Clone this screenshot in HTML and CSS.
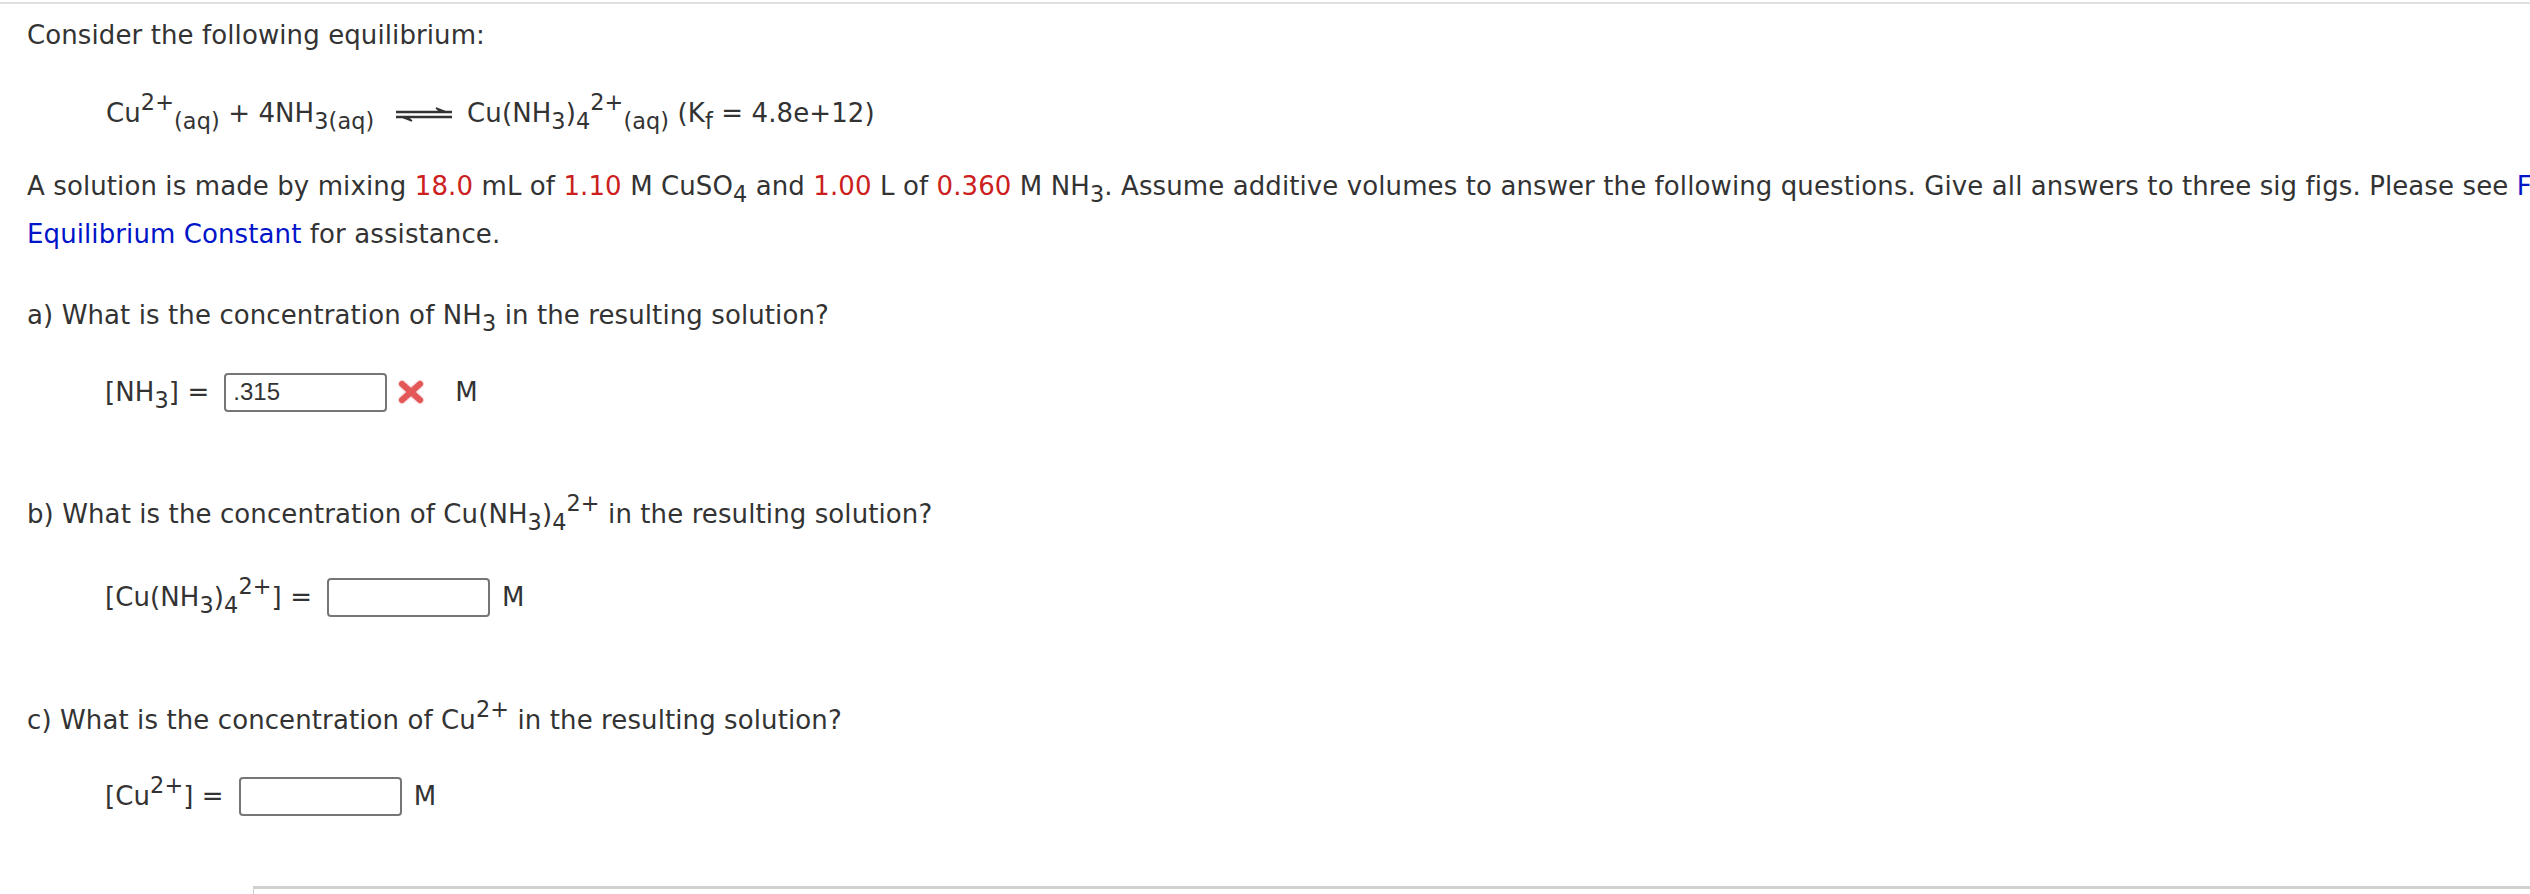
FILE: index.html
```html
<!DOCTYPE html>
<html>
<head>
<meta charset="utf-8">
<link rel="stylesheet" href="styles.css">
</head>
<body>
<div class="page">
  <div class="question">
    <p class="line intro">Consider the following equilibrium:</p>
    <p class="line eq">Cu<sup>2+</sup><sub>(aq)</sub> + 4NH<sub>3(aq)</sub> <svg class="arrow" width="58" height="18" viewBox="0 0 58 18"><path d="M1 7H57M1 12H57" stroke="#333" stroke-width="2.4" fill="none"/><path d="M41 3L50 6.5L45 6.5Z" fill="#333" stroke="#333" stroke-width="1.5"/><path d="M17 16L8 12.5L13 12.5Z" fill="#333" stroke="#333" stroke-width="1.5"/></svg> Cu(NH<sub>3</sub>)<sub>4</sub><sup>2+</sup><sub>(aq)</sub> (K<sub>f</sub> = 4.8e+12)</p>
    <p class="para">A solution is made by mixing <span class="red">18.0</span> mL of <span class="red">1.10</span> M CuSO<sub>4</sub> and <span class="red">1.00</span> L of <span class="red">0.360</span> M NH<sub>3</sub>. Assume additive volumes to answer the following questions. Give all answers to three sig figs. Please see <a class="link" href="#">Formation</a><br><a class="link" href="#">Equilibrium Constant</a> for assistance.</p>

    <p class="line part part-a">a) What is the concentration of NH<sub>3</sub> in the resulting solution?</p>
    <div class="answer answer-a">
      <span class="label">[NH<sub>3</sub>] =</span>
      <span class="box"><span class="val">.315</span></span>
      <svg class="wrong" width="28" height="24" viewBox="0 0 28 24"><path d="M5 4L23 20M23 4L5 20" stroke="#e35757" stroke-width="6" stroke-linecap="round" fill="none"/></svg>
      <span class="unit unit-a">M</span>
    </div>

    <p class="line part part-b">b) What is the concentration of Cu(NH<sub>3</sub>)<sub>4</sub><sup>2+</sup> in the resulting solution?</p>
    <div class="answer answer-b">
      <span class="label">[Cu(NH<sub>3</sub>)<sub>4</sub><sup>2+</sup>] =</span>
      <span class="box"></span>
      <span class="unit">M</span>
    </div>

    <p class="line part part-c">c) What is the concentration of Cu<sup>2+</sup> in the resulting solution?</p>
    <div class="answer answer-c">
      <span class="label">[Cu<sup>2+</sup>] =</span>
      <span class="box"></span>
      <span class="unit">M</span>
    </div>

    <div class="panel"></div>
  </div>
</div>
</body>
</html>
```

FILE: styles.css
```css
html, body {
  margin: 0;
  padding: 0;
  background: #fff;
  overflow: hidden;
}
body {
  font-family: "DejaVu Sans", Verdana, sans-serif;
  font-size: 26px;
  letter-spacing: 0.1px;
  color: #333;
}
.page {
  margin-top: 2px;
  border-top: 2px solid #e0e0e0;
}
.question {
  padding-left: 27px;
}
p {
  margin: 0;
}
sub, sup {
  font-size: 0.86em;
  line-height: 0;
}
sub { vertical-align: -0.3em; }
sup { vertical-align: 0.55em; }
.line {
  line-height: 38px;
  white-space: nowrap;
}
.intro {
  margin-top: 12px;
}
.eq {
  margin-top: 40px;
  padding-left: 79px;
}
.arrow {
  vertical-align: -1px;
  margin: 0 6px 0 12px;
}
.para {
  margin-top: 30px;
  line-height: 48px;
  white-space: nowrap;
}
.red {
  color: #cc2020;
}
.link {
  color: #0014c8;
  text-decoration: none;
}
.part-a { margin-top: 38px; }
.part-b { margin-top: 83px; }
.part-c { margin-top: 84px; }
.answer {
  display: flex;
  align-items: center;
  height: 40px;
  padding-left: 78px;
  white-space: nowrap;
}
.answer-a { margin-top: 38px; }
.answer-b { margin-top: 44px; }
.answer-c { margin-top: 37px; }
.label {
  margin-right: 15px;
}
.box {
  display: inline-flex;
  align-items: center;
  box-sizing: border-box;
  width: 163px;
  height: 39px;
  border: 2px solid #767676;
  border-radius: 4px;
  padding-left: 7px;
  font-family: "Liberation Sans", Arial, sans-serif;
  font-size: 24px;
  letter-spacing: 0;
  color: #333;
}
.wrong {
  margin-left: 10px;
  filter: drop-shadow(0 0 1px rgba(200, 40, 40, 0.5));
}
.unit {
  margin-left: 12px;
}
.unit-a {
  margin-left: 30px;
}
.panel {
  margin-top: 70px;
  margin-left: 226px;
  height: 60px;
  border-top: 3px solid #d0d0d0;
  border-left: 1px solid #d0d0d0;
}
```
